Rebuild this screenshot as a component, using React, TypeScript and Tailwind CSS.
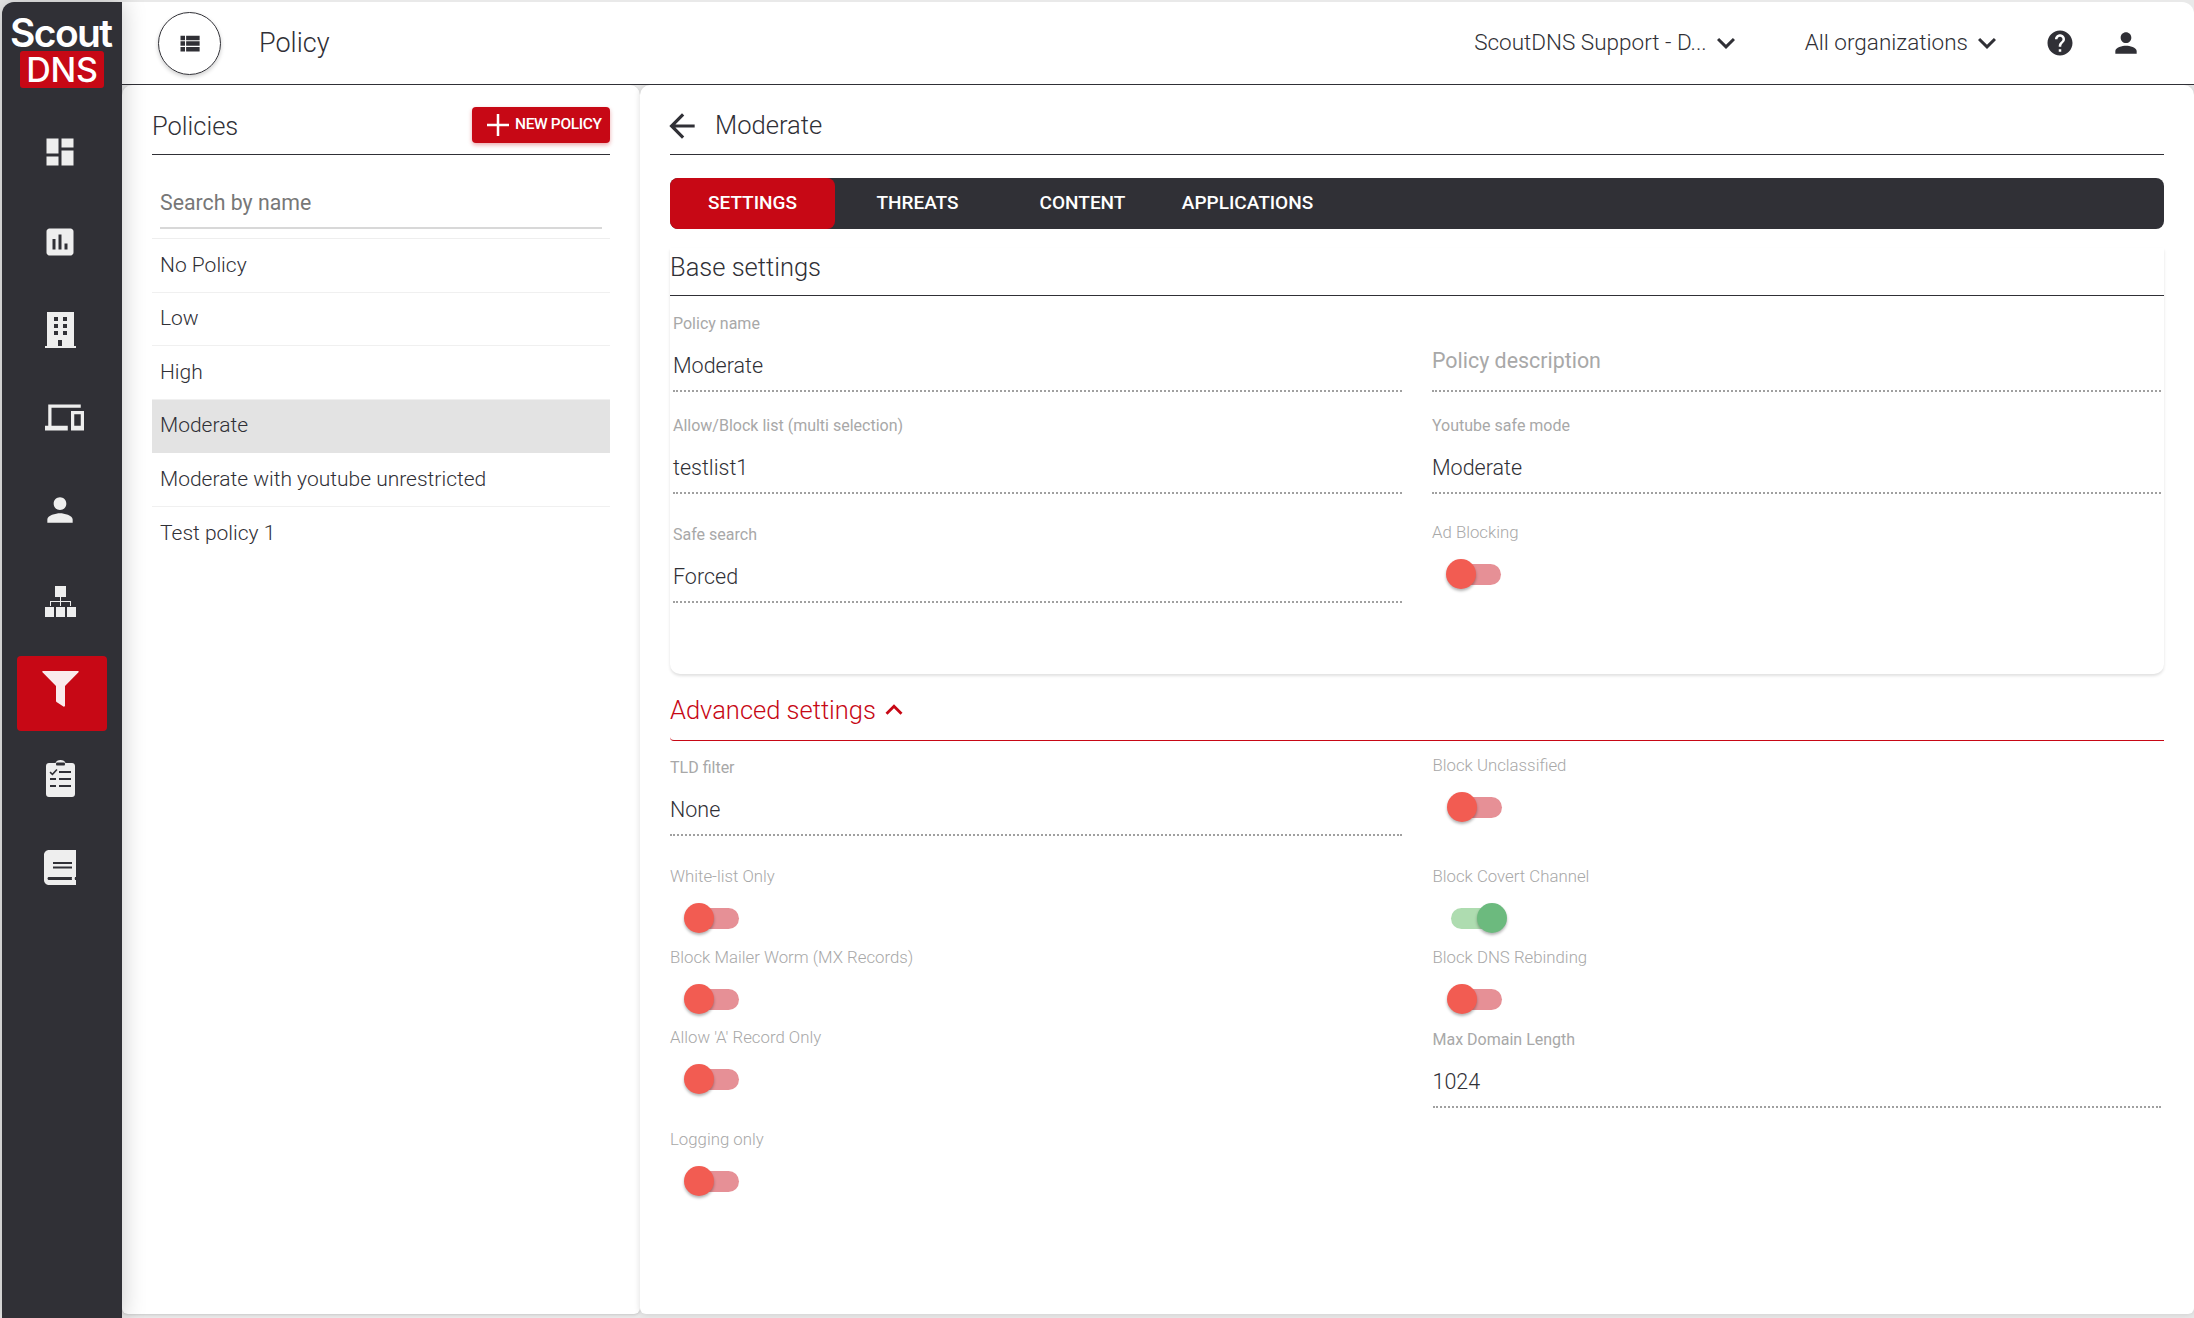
import React from "react";

const RB = { fontFamily: "Roboto, sans-serif" };

function MI({ d, size, className = "" }: { d: string; size: number; className?: string }) {
  return (
    <svg width={size} height={size} viewBox="0 0 24 24" fill="currentColor" className={"shrink-0 " + className}>
      <path d={d} />
    </svg>
  );
}

const P = {
  dashboard: "M3 13h8V3H3v10zm0 8h8v-6H3v6zm10 0h8V11h-8v10zm0-18v6h8V3h-8z",
  assessment: "M19 3H5c-1.1 0-2 .9-2 2v14c0 1.1.9 2 2 2h14c1.1 0 2-.9 2-2V5c0-1.1-.9-2-2-2zM9 17H7v-7h2v7zm4 0h-2V7h2v10zm4 0h-2v-4h2v4z",
  devices: "M4 6h18V4H2v13H0v3h14v-3H4V6zm20 2h-8v12h8V8zm-2 9h-4v-7h4v7z",
  person: "M12 12c2.21 0 4-1.79 4-4s-1.79-4-4-4-4 1.79-4 4 1.79 4 4 4zm0 2c-2.67 0-8 1.34-8 4v2h16v-2c0-2.66-5.33-4-8-4z",
  list: "M4 14h4v-4H4v4zm0 5h4v-4H4v4zM4 9h4V5H4v4zm5 5h12v-4H9v4zm0 5h12v-4H9v4zM9 5v4h12V5H9z",
  down: "M16.59 8.59L12 13.17 7.41 8.59 6 10l6 6 6-6z",
  up: "M12 8l-6 6 1.41 1.41L12 10.83l4.59 4.58L18 14z",
  help: "M12 2C6.48 2 2 6.48 2 12s4.48 10 10 10 10-4.48 10-10S17.52 2 12 2zm1 17h-2v-2h2v2zm2.07-7.75l-.9.92C13.45 12.9 13 13.5 13 15h-2v-.5c0-1.1.45-2.1 1.17-2.83l1.24-1.26c.37-.36.59-.86.59-1.41 0-1.1-.9-2-2-2s-2 .9-2 2H8c0-2.21 1.79-4 4-4s4 1.79 4 4c0 .88-.36 1.68-.93 2.25z",
  back: "M20 11H7.83l5.59-5.59L12 4l-8 8 8 8 1.41-1.41L7.83 13H20v-2z",
};

function BuildingIcon() {
  return (
    <svg width="31" height="36" viewBox="0 0 31 36" fill="#eeeeee">
      <path
        fillRule="evenodd"
        d="M2 0h27v34h2v2H0v-2h2V0zM9 5v4h4V5H9zm9 0v4h4V5h-4zm-9 7v4h4v-4H9zm9 0v4h4v-4h-4zm-9 7v4h4v-4H9zm9 0v4h4v-4h-4zm-5 9v6h4v-6h-4z"
      />
    </svg>
  );
}
function SitemapIcon() {
  return (
    <svg width="31" height="31" viewBox="0 0 31 31" fill="#eeeeee">
      <rect x="10" y="0" width="11" height="11" />
      <rect x="0" y="21" width="9" height="10" />
      <rect x="11" y="21" width="9" height="10" />
      <rect x="22" y="21" width="9" height="10" />
      <path d="M15 11h1v4h10v5h-1v-4H16v4h-1v-4H6v4H5v-5h10z" />
    </svg>
  );
}
function FunnelIcon() {
  return (
    <svg width="37" height="36" viewBox="0 0 37 36" fill="#faeaec" className="-mt-[10px]">
      <path d="M1 0h35c.8 0 1 .8.5 1.3L23 15v19.5c0 1-.8 1.5-1.6 1L14.500 31c-.3-.2-.5-.5-.5-1V15L.5 1.300C0 .8.200 0 1 0z" />
    </svg>
  );
}
function ClipboardIcon() {
  return (
    <svg width="29" height="37" viewBox="0 0 29 37" fill="#eeeeee">
      <path
        fillRule="evenodd"
        d="M3 3h6.500C10 1 12 0 14.500 0S19 1 19.500 3H26c1.700 0 3 1.300 3 3v28c0 1.700-1.300 3-3 3H3c-1.700 0-3-1.300-3-3V6c0-1.700 1.300-3 3-3zM11 2.500c-.5 0-1 .5-1 1.500s.5 1.500 1 1.500h7c.5 0 1-.5 1-1.500s-.5-1.500-1-1.500h-7zM13 11v2h12v-2H13zM13 18v2h12v-2H13zM13 25v2h12v-2H13zM4 18v2h6v-2H4zM4 25v2h6v-2H4zM4.500 11.500L3.500 12.800l3 2.700 5-5.500-1.200-1.100-3.900 4.300z"
      />
    </svg>
  );
}
function BookIcon() {
  return (
    <svg width="32" height="35" viewBox="0 0 32 35" fill="#eeeeee">
      <path
        fillRule="evenodd"
        d="M5 0h27v27h-1c-.4 1-.4 2 0 3h1v5H5c-2.800 0-5-2.200-5-5V5c0-2.800 2.200-5 5-5zM9 12v2h19v-2H9zm0 4.500v2h19v-2H9zM5 27c-1 0-1.500.7-1.500 1.500S4 30 5 30h23c-.3-1-.3-2 0-3H5z"
      />
    </svg>
  );
}

const nav: { key: string; cls: string; el: React.ReactNode; active?: boolean }[] = [
  { key: "a", cls: "mt-0", el: <MI d={P.dashboard} size={36} /> },
  { key: "b", cls: "mt-[15px]", el: <MI d={P.assessment} size={36} /> },
  { key: "c", cls: "mt-[13px]", el: <BuildingIcon /> },
  { key: "d", cls: "mt-[13px]", el: <span className="pl-[8px] flex"><MI d={P.devices} size={39} /></span> },
  { key: "e", cls: "mt-[17px]", el: <MI d={P.person} size={38} /> },
  { key: "f", cls: "mt-[17px]", el: <SitemapIcon /> },
  { key: "g", cls: "mt-[17px]", el: <FunnelIcon />, active: true },
  { key: "h", cls: "mt-[10px]", el: <ClipboardIcon /> },
  { key: "i", cls: "mt-[14px]", el: <BookIcon /> },
];

function Sidebar() {
  return (
    <aside className="w-[120px] shrink-0 bg-[#303036] rounded-tl-[12px] flex flex-col text-[#eeeeee] z-20 shadow-[0_0_24px_rgba(0,0,0,0.22)]">
      <div className="h-[112px] flex flex-col items-start pt-[13px]" style={{ fontFamily: "Inter, sans-serif" }}>
        <div className="text-white h-[35px] leading-[35px] tracking-[-1.6px] pl-[8px] text-[39px] font-semibold">
          Scout
        </div>
        <div className="ml-[18px] mt-[1px] w-[84px] h-[37px] rounded-[3px] bg-[#c70815] text-white flex items-center justify-center text-[34px] leading-none font-medium tracking-[-0.3px]">
          DNS
        </div>
      </div>
      <nav className="flex flex-col mx-[15px]">
        {nav.map((n) => (
          <div
            key={n.key}
            className={"h-[75px] flex items-center justify-center rounded-[4px] " + n.cls + (n.active ? " bg-[#c70815]" : "")}
          >
            <span className="flex -ml-[4px]">{n.el}</span>
          </div>
        ))}
      </nav>
    </aside>
  );
}

function Header() {
  return (
    <header className="h-[83px] shrink-0 bg-white border-b border-[#303036] rounded-tr-[12px] flex items-center text-[#303036] z-10">
      <div className="ml-[36px] w-[63px] h-[63px] rounded-full border border-[#303036] flex items-center justify-center shadow-[0_2px_4px_rgba(0,0,0,0.2)]">
        <MI d={P.list} size={27} />
      </div>
      <div className="ml-[38px] text-[27px] font-light leading-none">Policy</div>
      <div className="flex-1" />
      <div className="text-[22.5px] font-light leading-none pb-[1px]">ScoutDNS Support - D...</div>
      <MI d={P.down} size={36} className="ml-[1px]" />
      <div className="ml-[61px] text-[22.5px] font-light leading-none pb-[1px]">All organizations</div>
      <MI d={P.down} size={36} className="ml-[1px]" />
      <span className="ml-[40px] flex"><MI d={P.help} size={30} /></span>
      <span className="ml-[35px] mr-[52px] flex"><MI d={P.person} size={32} /></span>
    </header>
  );
}

const policies = ["No Policy", "Low", "High", "Moderate", "Moderate with youtube unrestricted", "Test policy 1"];

function PolicyList() {
  return (
    <section className="w-[518px] shrink-0 bg-white rounded-t-[10px] rounded-b-[6px] px-[30px] shadow-[0_1px_3px_rgba(0,0,0,0.15)]">
      <div className="h-[70px] pt-[14px] flex items-center justify-between border-b border-[#303036] text-[#303036]">
        <div className="text-[25.5px] font-light">Policies</div>
        <button className="w-[138px] h-[36px] -mt-[4px] rounded-[4px] bg-[#c70815] text-white flex items-center pl-[14px] shadow-[0_2px_4px_rgba(199,8,21,0.35)]">
          <svg width="24" height="24" viewBox="0 0 24 24" fill="#ffffff" className="shrink-0">
            <rect x="10.75" y="1" width="2.500" height="22" />
            <rect x="1" y="10.75" width="22" height="2.500" />
          </svg>
          <span className="ml-[5px] text-[15.5px] font-medium tracking-[-0.35px] leading-none whitespace-nowrap">NEW POLICY</span>
        </button>
      </div>
      <div className="h-[84px] border-b border-[#eeeeee] px-[8px]">
        <div className="h-[74px] flex items-end pb-[11px] border-b-2 border-[#d8d8d8] text-[21.3px] text-[#777777] leading-[26px]">
          Search by name
        </div>
      </div>
      {policies.map((p) => (
        <div
          key={p}
          className={
            "h-[53.6px] flex items-center px-[8px] text-[21px] font-light text-[#303036] border-b " +
            (p === "Moderate" ? "bg-[#e3e3e3] border-[#e3e3e3]" : p === "Test policy 1" ? "border-transparent" : "border-[#f0f0f0]")
          }
        >
          {p}
        </div>
      ))}
    </section>
  );
}

function Toggle({ on = false }: { on?: boolean }) {
  return (
    <div className="h-[42px] pt-[20px] flex items-center pl-[18px]">
      <div className={"relative w-[51px] h-[21px] rounded-full " + (on ? "bg-[#aedcb0]" : "bg-[#e69096]")}>
        <div
          className={
            "absolute top-[-5px] w-[30px] h-[30px] rounded-full shadow-[0_2px_3px_rgba(0,0,0,0.3)] " +
            (on ? "left-[26px] bg-[#6cba7e]" : "left-[-4px] bg-[#f25c52]")
          }
        />
      </div>
    </div>
  );
}

function ToggleField({ label, on, className = "" }: { label: string; on?: boolean; className?: string }) {
  return (
    <div className={className}>
      <div className="h-[20px] flex items-center text-[16.8px] font-light text-[#a8a8a8] whitespace-nowrap">{label}</div>
      <Toggle on={on} />
    </div>
  );
}

function Field({ label, value, className = "" }: { label: string; value: string; className?: string }) {
  return (
    <div className={"border-b-2 border-dotted border-[#a0a0a0] h-[78px] " + className}>
      <div className="h-[20px] flex items-center text-[16px] text-[#a8a8a8] whitespace-nowrap">{label}</div>
      <div className="h-[56px] flex items-end text-[21.5px] font-light text-[#303036] leading-[26px] pb-[11px]">{value}</div>
    </div>
  );
}

const tabs = ["SETTINGS", "THREATS", "CONTENT", "APPLICATIONS"];

function Detail() {
  return (
    <section className="flex-1 bg-white rounded-t-[10px] rounded-b-[6px] px-[30px] shadow-[0_0_6px_rgba(0,0,0,0.14)] text-[#303036]">
      <div className="h-[70px] pt-[14px] border-b border-[#303036] flex items-center">
        <MI d={P.back} size={38} className="-ml-[7px] -mt-[2px]" />
        <div className="ml-[14px] text-[25.6px] font-light pb-[2px]">Moderate</div>
      </div>
      <div className="mt-[23px] h-[51px] bg-[#303036] rounded-[8px] flex">
        {tabs.map((t, i) => (
          <div
            key={t}
            className={
              "w-[165px] flex items-center justify-center text-[19px] font-medium text-white pb-[1px] " +
              (i === 0 ? "bg-[#c70815] rounded-[8px]" : "")
            }
          >
            {t}
          </div>
        ))}
      </div>
      <div className="mt-[19px] h-[426px] rounded-b-[10px] shadow-[0_2px_3px_rgba(0,0,0,0.12)]">
        <div className="h-[48px] border-b border-[#303036] text-[25.5px] font-light leading-[38px]">Base settings</div>
        <div className="grid grid-cols-2 gap-x-[30px] px-[3px]">
          <div className="flex flex-col">
            <Field className="mt-[18px]" label="Policy name" value="Moderate" />
            <Field className="mt-[24px]" label="Allow/Block list (multi selection)" value="testlist1" />
            <Field className="mt-[31px]" label="Safe search" value="Forced" />
          </div>
          <div className="flex flex-col">
            <div className="mt-[18px] h-[78px] border-b-2 border-dotted border-[#a0a0a0] flex items-end pb-[16px] text-[21.4px] text-[#a8a8a8] leading-[26px]">
              Policy description
            </div>
            <Field className="mt-[24px]" label="Youtube safe mode" value="Moderate" />
            <ToggleField className="mt-[29px]" label="Ad Blocking" />
          </div>
        </div>
      </div>
      <div className="mt-[16px] h-[51px] pb-[8px] border-b border-[#c70815] flex items-center text-[#c70815] rounded-bl-[4px]">
        <span className="text-[25.5px] font-light pb-[2px]">Advanced settings</span>
        <MI d={P.up} size={34} className="-mt-[2px] ml-[1px]" />
      </div>
      <div className="grid grid-cols-2 gap-x-[31px]">
        <div className="flex flex-col">
          <Field className="mt-[17px]" label="TLD filter" value="None" />
          <ToggleField className="mt-[31px]" label="White-list Only" />
          <ToggleField className="mt-[19px]" label="Block Mailer Worm (MX Records)" />
          <ToggleField className="mt-[18px]" label="Allow 'A' Record Only" />
          <ToggleField className="mt-[40px]" label="Logging only" />
        </div>
        <div className="flex flex-col pr-[3px]">
          <ToggleField className="mt-[15px]" label="Block Unclassified" />
          <ToggleField className="mt-[49px]" label="Block Covert Channel" on />
          <ToggleField className="mt-[19px]" label="Block DNS Rebinding" />
          <Field className="mt-[20px]" label="Max Domain Length" value="1024" />
        </div>
      </div>
    </section>
  );
}

export default function App() {
  return (
    <div className="w-[2194px] h-[1318px] bg-[#e9e9e9] pl-[2px] pt-[2px] flex overflow-hidden" style={RB}>
      <Sidebar />
      <main className="flex-1 flex flex-col">
        <Header />
        <div className="h-[1229px] flex">
          <PolicyList />
          <Detail />
        </div>
      </main>
    </div>
  );
}
